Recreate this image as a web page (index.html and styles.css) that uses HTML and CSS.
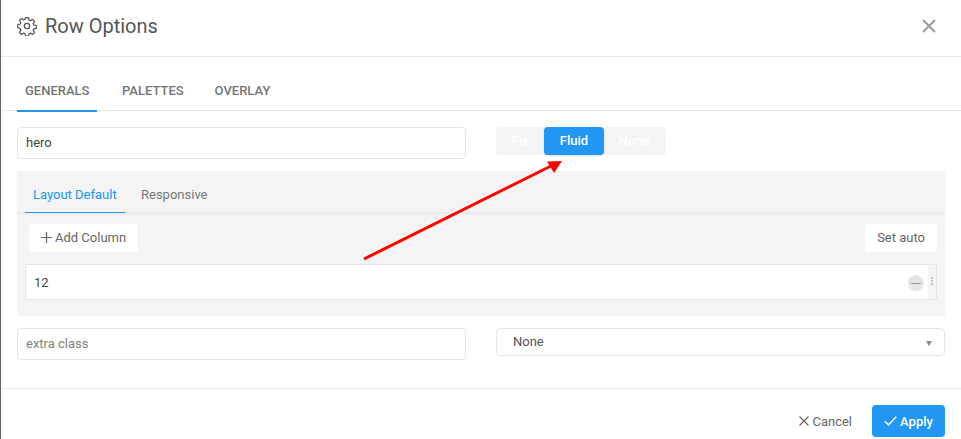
FILE: index.html
```html
<!DOCTYPE html>
<html lang="en">
<head>
<meta charset="utf-8">
<title>Row Options</title>
<link rel="stylesheet" href="styles.css">
</head>
<body>
<div class="modal">
  <header class="head">
    <div class="title">
      <svg class="gear" width="20" height="20" viewBox="0 0 24 24" fill="none" stroke="#555" stroke-width="1.5" stroke-linejoin="round"><circle cx="12" cy="12" r="3.2"/><path d="M10.2 2h3.6l.5 2.9 1.9.8 2.4-1.7 2.5 2.5-1.7 2.4.8 1.9 2.9.5v3.6l-2.9.5-.8 1.9 1.7 2.4-2.5 2.500-2.400-1.700-1.900.8-.5 2.900h-3.600l-.5-2.900-1.900-.8-2.400 1.700-2.500-2.500 1.700-2.400-.8-1.900L.9 13.800v-3.600l2.900-.5.8-1.900-1.700-2.400 2.500-2.500 2.400 1.700 1.900-.8z"/></svg>
      <span>Row Options</span>
    </div>
    <svg class="close" width="14" height="14" viewBox="0 0 14 14" stroke="#999" stroke-width="1.8"><path d="M1 1l12 12M13 1L1 13"/></svg>
  </header>
  <nav class="tabs">
    <span class="tab active">GENERALS</span>
    <span class="tab">PALETTES</span>
    <span class="tab">OVERLAY</span>
  </nav>
  <main class="body">
    <div class="grid top">
      <div class="field">hero</div>
      <div class="seg">
        <span class="seg-item">Fix</span>
        <span class="seg-item on">Fluid</span>
        <span class="seg-item">None</span>
      </div>
    </div>
    <section class="panel">
      <div class="subtabs">
        <span class="subtab active">Layout Default</span>
        <span class="subtab">Responsive</span>
      </div>
      <div class="actions">
        <span class="btn"><svg width="11" height="11" viewBox="0 0 11 11" stroke="#666" stroke-width="1.2"><path d="M5.500 0v11M0 5.500h11"/></svg>Add Column</span>
        <span class="btn">Set auto</span>
      </div>
      <div class="row">
        <span class="row-label">12</span>
        <span class="row-side">
          <span class="minus"></span>
          <span class="dots"></span>
        </span>
      </div>
    </section>
    <div class="grid bottom">
      <div class="field muted">extra class</div>
      <div class="select"><span>None</span><span class="caret"></span></div>
    </div>
  </main>
  <footer class="foot">
    <span class="cancel"><svg width="10" height="10" viewBox="0 0 10 10" stroke="#666" stroke-width="1.200"><path d="M.5.5l9 9M9.500.5l-9 9"/></svg>Cancel</span>
    <span class="apply"><svg width="13" height="10" viewBox="0 0 13 10" fill="none" stroke="#fff" stroke-width="1.500"><path d="M.8 5.200l3.700 3.700L12.200.8"/></svg>Apply</span>
  </footer>
  <svg class="arrow" width="210" height="110" viewBox="0 0 210 110"><path d="M1 106L190 12" stroke="#ff0000" stroke-width="3"/><path d="M199 8L184 8.500L191 20z" fill="#ff0000"/></svg>
</div>
</body>
</html>
```
FILE: styles.css
```css
* { box-sizing: border-box; }
html, body { margin: 0; height: 100%; }
body {
  background: #fff;
  color: #555;
  font-family: Roboto, "Liberation Sans", sans-serif;
  overflow: hidden;
}
.modal {
  position: relative;
  width: 961px;
  height: 439px;
  border-left: 1px solid #666;
  background: #fff;
}
.head {
  height: 57px;
  border-bottom: 1px solid #e9e9e9;
  display: flex;
  align-items: center;
  justify-content: space-between;
  padding: 0 25px 4px 16px;
}
.title {
  display: flex;
  align-items: center;
  gap: 8px;
  font-size: 20px;
  color: #555;
}
.tabs {
  height: 54px;
  border-bottom: 1px solid #e9e9e9;
  display: flex;
  padding-left: 16px;
}
.tab {
  height: 55px;
  padding: 26px 0 0 8px;
  width: 80px;
  font-size: 13px;
  font-weight: 500;
  color: #757575;
  line-height: 15px;
  margin-right: 17px;
  white-space: nowrap;
}
.tab + .tab { width: auto; padding: 26px 8px 0; margin-right: 15px; }
.tab.active { border-bottom: 2px solid #2196f3; }
.body { padding: 16px 15px 0 16px; }
.grid {
  display: grid;
  grid-template-columns: 449px 449px;
  column-gap: 30px;
}
.field {
  height: 32px;
  border: 1px solid #e6e6e6;
  border-radius: 4px;
  padding: 0 8px;
  font-size: 13px;
  line-height: 30px;
  color: #444;
}
.field.muted { color: #808080; }
.seg {
  width: 170px;
  height: 28px;
  background: #f4f4f4;
  border-radius: 4px;
  display: flex;
}
.seg-item {
  width: 48px;
  text-align: center;
  font-size: 13px;
  font-weight: 500;
  line-height: 28px;
  color: #fff;
}
.seg-item.on {
  width: 60px;
  background: #2196f3;
  border-radius: 4px;
  box-shadow: 0 1px 2px rgba(0,0,0,.15);
}
.seg-item:last-child { width: 60px; }
.panel {
  margin-top: 12px;
  width: 928px;
  height: 145px;
  background: #f4f4f4;
  padding: 0 8px;
}
.subtabs {
  height: 41px;
  display: flex;
  margin: 0 -8px;
  padding-left: 8px;
  box-shadow: 0 2px 2px rgba(0,0,0,.05);
}
.subtab {
  height: 42px;
  padding: 16px 8px 0;
  font-size: 13px;
  line-height: 15px;
  color: #777;
}
.subtab.active { color: #2196f3; border-bottom: 1px solid #2196f3; margin-right: 8px; width: 100px; }
.actions {
  display: flex;
  justify-content: space-between;
  margin-top: 12px;
  padding: 0 0 0 4px;
}
.btn {
  height: 28px;
  padding: 0 12px 2px;
  display: flex;
  align-items: center;
  gap: 3px;
  background: #fff;
  border-radius: 4px;
  font-size: 13px;
  color: #666;
}
.row {
  margin-top: 12px;
  height: 36px;
  background: #fff;
  border: 1px solid #e6e6e6;
  display: flex;
  justify-content: space-between;
  align-items: center;
  padding-left: 8px;
  font-size: 13px;
  color: #444;
}
.row-side {
  align-self: stretch;
  display: flex;
  align-items: center;
  gap: 4px;
  width: 32px;
  justify-content: flex-end;
}
.minus {
  flex: none;
  width: 16px;
  height: 16px;
  margin-top: 2px;
  border-radius: 50%;
  background: #e6e6e6;
  position: relative;
}
.minus::after {
  content: "";
  position: absolute;
  left: 3px;
  right: 3px;
  top: 8px;
  height: 1px;
  background: #999;
}
.dots {
  flex: none;
  align-self: stretch;
  width: 8px;
  background: #f4f4f4;
  position: relative;
}
.dots::after {
  content: "";
  position: absolute;
  left: 3px;
  top: 12px;
  width: 2px;
  height: 2px;
  background: #c4c4c4;
  box-shadow: 0 3px 0 #c4c4c4, 0 6px 0 #c4c4c4;
}
.bottom { margin-top: 12px; }
.select {
  height: 28px;
  border: 1px solid #e6e6e6;
  border-radius: 4px;
  padding: 0 12px 2px 16px;
  display: flex;
  align-items: center;
  justify-content: space-between;
  font-size: 13px;
  color: #555;
}
.caret {
  width: 0;
  height: 0;
  margin-top: 4px;
  border-left: 3px solid transparent;
  border-right: 3px solid transparent;
  border-top: 5px solid #888;
}
.foot {
  position: absolute;
  left: 0;
  right: 0;
  top: 388px;
  height: 51px;
  border-top: 1px solid #e9e9e9;
  display: flex;
  justify-content: flex-end;
  align-items: flex-start;
  gap: 20px;
  padding: 16px 16px 0 0;
}
.cancel {
  height: 32px;
  display: flex;
  align-items: center;
  gap: 3px;
  font-size: 13px;
  color: #666;
}
.apply {
  width: 73px;
  height: 32px;
  background: #2196f3;
  border-radius: 4px;
  display: flex;
  align-items: center;
  justify-content: center;
  gap: 3px;
  font-size: 13px;
  font-weight: 500;
  color: #fff;
}
.arrow {
  position: absolute;
  left: 362px;
  top: 153px;
}
```
